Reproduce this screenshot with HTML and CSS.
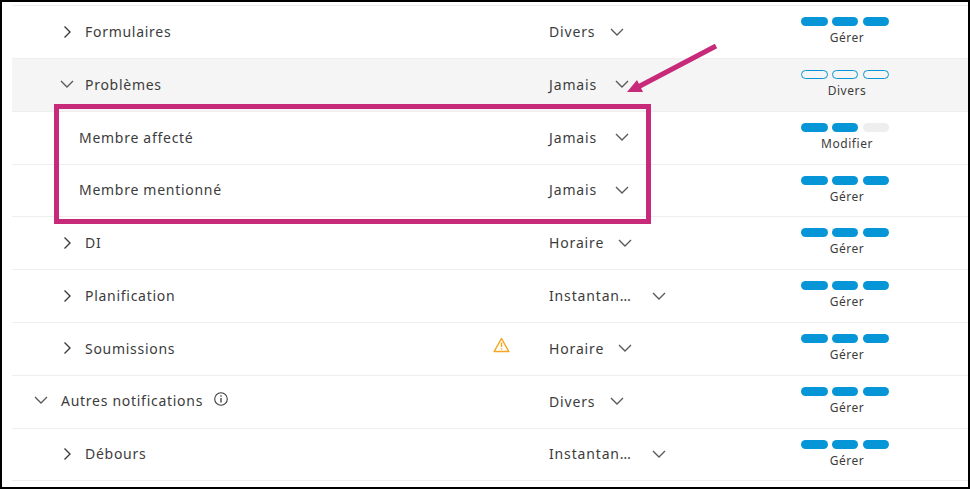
FILE: index.html
```html
<!DOCTYPE html>
<html lang="fr">
<head>
    <meta charset="UTF-8">
    <title>Notifications</title>
    <link rel="stylesheet" href="styles.css">
</head>
<body>
    <div class="frame">
        <svg width="0" height="0" class="defs">
            <symbol id="chev-right" viewBox="0 0 14 14"><path d="M4.500 1.500 10 7l-5.500 5.500" fill="none" stroke="#3c3c3c" stroke-width="1.400"/></symbol>
            <symbol id="chev-down" viewBox="0 0 14 14"><path d="M1 4 7 10l6-6" fill="none" stroke="#5a5a5a" stroke-width="1.400"/></symbol>
        </svg>

        <div class="table">
            <div class="row">
                <div class="name sub"><svg class="chev"><use href="#chev-right"/></svg><span>Formulaires</span></div>
                <div class="select"><span class="val-divers">Divers</span><svg class="chev-sel"><use href="#chev-down"/></svg></div>
                <div class="access"><div class="bars"><i class="on"></i><i class="on"></i><i class="on"></i></div><span>Gérer</span></div>
            </div>
            <div class="row open">
                <div class="name sub"><svg class="chev"><use href="#chev-down"/></svg><span>Problèmes</span></div>
                <div class="select"><span class="val-jamais">Jamais</span><svg class="chev-sel"><use href="#chev-down"/></svg></div>
                <div class="access"><div class="bars"><i class="line"></i><i class="line"></i><i class="line"></i></div><span>Divers</span></div>
            </div>
            <div class="row">
                <div class="name child"><span>Membre affecté</span></div>
                <div class="select"><span class="val-jamais">Jamais</span><svg class="chev-sel"><use href="#chev-down"/></svg></div>
                <div class="access"><div class="bars"><i class="on"></i><i class="on"></i><i></i></div><span>Modifier</span></div>
            </div>
            <div class="row">
                <div class="name child"><span>Membre mentionné</span></div>
                <div class="select"><span class="val-jamais">Jamais</span><svg class="chev-sel"><use href="#chev-down"/></svg></div>
                <div class="access"><div class="bars"><i class="on"></i><i class="on"></i><i class="on"></i></div><span>Gérer</span></div>
            </div>
            <div class="row">
                <div class="name sub"><svg class="chev"><use href="#chev-right"/></svg><span>DI</span></div>
                <div class="select"><span class="val-horaire">Horaire</span><svg class="chev-sel"><use href="#chev-down"/></svg></div>
                <div class="access"><div class="bars"><i class="on"></i><i class="on"></i><i class="on"></i></div><span>Gérer</span></div>
            </div>
            <div class="row">
                <div class="name sub"><svg class="chev"><use href="#chev-right"/></svg><span>Planification</span></div>
                <div class="select"><span class="val-instant">Instantan…</span><svg class="chev-sel"><use href="#chev-down"/></svg></div>
                <div class="access"><div class="bars"><i class="on"></i><i class="on"></i><i class="on"></i></div><span>Gérer</span></div>
            </div>
            <div class="row">
                <div class="name sub"><svg class="chev"><use href="#chev-right"/></svg><span>Soumissions</span>
                    <svg class="warn" viewBox="0 0 17 16"><path d="M8.500 1.500 15.800 14.500H1.200Z" fill="none" stroke="#f5a623" stroke-width="1.500" stroke-linejoin="round"/><path d="M8.500 5.500v4.500M8.500 11.300v1.300" stroke="#f5a623" stroke-width="1.500"/></svg>
                </div>
                <div class="select"><span class="val-horaire">Horaire</span><svg class="chev-sel"><use href="#chev-down"/></svg></div>
                <div class="access"><div class="bars"><i class="on"></i><i class="on"></i><i class="on"></i></div><span>Gérer</span></div>
            </div>
            <div class="row">
                <div class="name top"><svg class="chev"><use href="#chev-down"/></svg><span>Autres notifications</span>
                    <svg class="info" viewBox="0 0 14 14"><circle cx="7" cy="7" r="6.300" fill="none" stroke="#3c3c3c" stroke-width="1.100"/><path d="M7 6v4.500M7 3.300v1.400" stroke="#3c3c3c" stroke-width="1.300"/></svg>
                </div>
                <div class="select"><span class="val-divers">Divers</span><svg class="chev-sel"><use href="#chev-down"/></svg></div>
                <div class="access"><div class="bars"><i class="on"></i><i class="on"></i><i class="on"></i></div><span>Gérer</span></div>
            </div>
            <div class="row">
                <div class="name sub"><svg class="chev"><use href="#chev-right"/></svg><span>Débours</span></div>
                <div class="select"><span class="val-instant">Instantan…</span><svg class="chev-sel"><use href="#chev-down"/></svg></div>
                <div class="access"><div class="bars"><i class="on"></i><i class="on"></i><i class="on"></i></div><span>Gérer</span></div>
            </div>
        </div>

        <!-- annotation over the table -->
        <div class="highlight"></div>
        <svg class="arrow" viewBox="0 0 100 60"><path d="M91 3 13 44" stroke="#c72a78" stroke-width="5"/><path d="M2 49 12 37 18 49Z" fill="#c72a78"/></svg>
    </div>
</body>
</html>
```

FILE: styles.css
```css
html, body {
    margin: 0;
    padding: 0;
    background: white;
}
.frame {
    position: relative;
    box-sizing: border-box;
    width: 970px;
    height: 489px;
    border: 2px solid #000;
    padding: 3.2px 0 0 10px;
    overflow: hidden;
    font-family: "Noto Sans", sans-serif;
    color: #3c3c3c;
}
.defs {
    position: absolute;
}
.table {
    border-top: 1px solid #eee;
}
.row {
    display: grid;
    grid-template-columns: 537px 226px 140px;
    height: 52.8px;
    box-sizing: border-box;
    border-bottom: 1px solid #eee;
    font-size: 14px;
    letter-spacing: 0.72px;
}
.row.open {
    background: #f5f5f5;
}
.name {
    display: flex;
    align-items: center;
    padding-bottom: 1px;
}
.name.sub {
    padding-left: 48px;
}
.name.top {
    padding-left: 22px;
    padding-bottom: 3px;
}
.name.child {
    padding-left: 67px;
}
.chev {
    width: 14px;
    height: 14px;
    margin-right: 11px;
    flex-shrink: 0;
}
.name.top .chev {
    margin-right: 13px;
}
.warn {
    width: 17px;
    height: 16px;
    margin-left: auto;
    margin-right: 39px;
    margin-top: -7px;
}
.info {
    width: 14px;
    height: 14px;
    margin-left: 11px;
    margin-top: -3px;
}
.select {
    display: flex;
    align-items: center;
    padding-bottom: 1px;
    letter-spacing: 0.85px;
}
.val-divers {
    width: 46px;
}
.val-jamais {
    width: 51px;
}
.val-horaire {
    width: 54px;
}
.val-instant {
    width: 88px;
}
.chev-sel {
    width: 14px;
    height: 14px;
    margin-left: 15px;
    flex-shrink: 0;
}
.access {
    display: flex;
    flex-direction: column;
    align-items: center;
    padding-top: 11px;
    font-size: 12px;
    letter-spacing: 0.55px;
    line-height: 16px;
}
.access span {
    margin-left: 4px;
}
.bars {
    display: flex;
    gap: 4.250px;
    margin-bottom: 4px;
}
.bars i {
    display: block;
    box-sizing: border-box;
    width: 26.500px;
    height: 9px;
    border-radius: 5px;
    background: #eeeeee;
}
.bars i.on {
    background: #0696d7;
}
.bars i.line {
    background: transparent;
    border: 1px solid #0696d7;
}
.highlight {
    position: absolute;
    left: 52px;
    top: 102px;
    width: 597px;
    height: 120px;
    box-sizing: border-box;
    border: 5px solid #c72a78;
}
.arrow {
    position: absolute;
    left: 623px;
    top: 41px;
    width: 100px;
    height: 60px;
}
```
